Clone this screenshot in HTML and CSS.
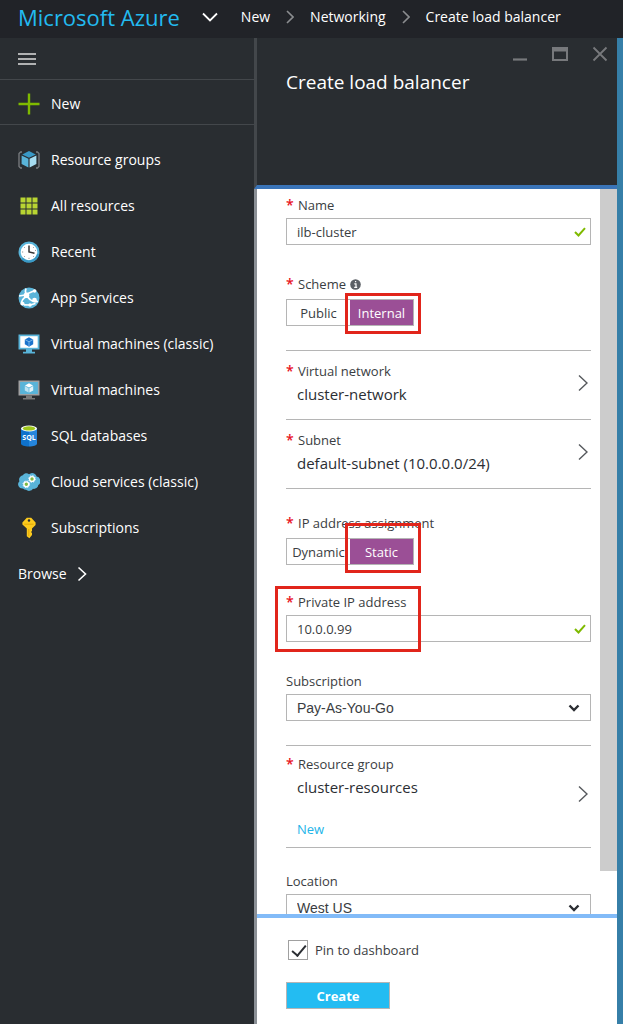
FILE: index.html
```html
<!DOCTYPE html>
<html lang="en">
<head>
<meta charset="utf-8">
<title>Create load balancer - Microsoft Azure</title>
<meta name="viewport" content="width=device-width, initial-scale=1.0">
<link rel="stylesheet" href="styles.css">
</head>
<body>

<header class="topbar">
    <a class="brand" href="#">Microsoft Azure</a>
    <button type="button" class="brand-toggle" aria-label="Switch portal">
        <svg width="16" height="10" viewBox="0 0 16 10"><path d="M1 1.5 L8 8.5 L15 1.5"/></svg>
    </button>
    <nav class="crumbs">
        <a href="#">New</a>
        <svg width="8" height="14" viewBox="0 0 8 14"><path d="M1 1 L7 7 L1 13"/></svg>
        <a href="#">Networking</a>
        <svg width="8" height="14" viewBox="0 0 8 14"><path d="M1 1 L7 7 L1 13"/></svg>
        <a href="#">Create load balancer</a>
    </nav>
</header>

<div class="portal">
    <nav class="sidebar">
        <button type="button" class="menu-btn" aria-label="Menu">
            <svg width="18" height="12" viewBox="0 0 18 12"><path d="M0 1H18M0 6H18M0 11H18"/></svg>
        </button>
        <a class="new-link" href="#">
            <svg width="22" height="22" viewBox="0 0 22 22"><path d="M11 0.5V21.5M0.5 11H21.5" stroke="#7fba00" stroke-width="2.4"/></svg>
            New
        </a>
        <ul class="services">
            <li><a href="#">
                <svg width="22" height="22" viewBox="0 0 22 22">
                    <path d="M4 3H2.6L1 4.6V17.4L2.6 19H4M18 3H19.4L21 4.6V17.4L19.4 19H18" fill="none" stroke="#7a7d80" stroke-width="1.3"/>
                    <path d="M11 2L17.8 5.4L11 8.8L4.2 5.4Z" fill="#3999c6"/>
                    <path d="M3.6 6.4L10.4 9.8V18.6L3.6 14.9Z" fill="#59b4d9"/>
                    <path d="M18.4 6.4L11.6 9.8V18.6L18.4 14.9Z" fill="#a6dcf0"/>
                </svg>
                Resource groups
            </a></li>
            <li><a href="#">
                <svg width="22" height="22" viewBox="0 0 22 22" fill="#b8d432">
                    <path d="M2.5 2.5h5v5h-5zM8.5 2.5h5v5h-5zM14.5 2.5h5v5h-5zM2.5 8.5h5v5h-5zM8.5 8.5h5v5h-5zM14.5 8.5h5v5h-5zM2.5 14.5h5v5h-5zM8.5 14.5h5v5h-5zM14.5 14.5h5v5h-5z"/>
                </svg>
                All resources
            </a></li>
            <li><a href="#">
                <svg width="22" height="22" viewBox="0 0 22 22">
                    <circle cx="11" cy="11" r="9.4" fill="#fff" stroke="#59b4d9" stroke-width="2.2"/>
                    <path d="M4 17.5A9.4 9.4 0 0 0 20 13" fill="none" stroke="#3999c6" stroke-width="2.2"/>
                    <path d="M11 4.5V11L16.5 12.3" fill="none" stroke="#333" stroke-width="1.5"/>
                    <path d="M4 11H5.2M17 9.5L18 9.3M11 16.8V18M6 6L6.8 6.8M16 6L15.2 6.8M6 16L6.8 15.2M16 16L15.2 15.2" stroke="#888" stroke-width="0.9"/>
                </svg>
                Recent
            </a></li>
            <li><a href="#">
                <svg width="22" height="22" viewBox="0 0 22 22">
                    <circle cx="11" cy="11" r="10.5" fill="#59b4d9"/>
                    <path d="M8 1.5C6.5 5 8 9 12 12.5C14 14.5 17 15 20 14.5M7.5 7.5L17.5 3.2M9 9.5C5 11 3 14 3.5 18M6 17.8L12 18L17.5 16.5M1 9L7.5 8" fill="none" stroke="#fff" stroke-width="1.7"/>
                    <circle cx="8.5" cy="8.2" r="2.8" fill="#fff"/>
                    <circle cx="16.5" cy="13.2" r="2.4" fill="#fff"/>
                    <circle cx="12" cy="18" r="1.7" fill="#fff"/>
                    <circle cx="4.6" cy="16.6" r="1.9" fill="#fff"/>
                    <circle cx="16.6" cy="4" r="1.7" fill="#fff"/>
                </svg>
                App Services
            </a></li>
            <li><a href="#">
                <svg width="22" height="22" viewBox="0 0 22 22">
                    <path d="M0.5 1.5H21.5V16.5H14V18.7H17V20.5H5V18.7H8V16.5H0.5Z" fill="#59b4d9"/>
                    <path d="M2.3 3.2H19.7V14.8H2.3Z" fill="#fff"/>
                    <path d="M11 4.2L15.2 6.5V11.2L11 13.8L6.8 11.2V6.5Z" fill="#1b73cc"/>
                    <path d="M7 6.6L11 8.8L15 6.6M11 8.8V13.5" fill="none" stroke="#8cc4f0" stroke-width="0.8"/>
                </svg>
                Virtual machines (classic)
            </a></li>
            <li><a href="#">
                <svg width="22" height="22" viewBox="0 0 22 22">
                    <path d="M0.5 1.5H21.5V16.5H0.5Z" fill="#a0a1a2"/>
                    <path d="M8 16.5H14V19H17V20.5H5V19H8Z" fill="#7a7a7a"/>
                    <path d="M2.1 3H19.9V15H2.1Z" fill="#59b4d9"/>
                    <path d="M11 4.2L15 6.4L11 8.6L7 6.4Z" fill="#fff"/>
                    <path d="M6.8 7L10.6 9.2V13.6L6.8 11.4Z" fill="#bde3f3"/>
                    <path d="M15.2 7L11.4 9.2V13.6L15.2 11.4Z" fill="#e3f4fa"/>
                </svg>
                Virtual machines
            </a></li>
            <li><a href="#">
                <svg width="22" height="22" viewBox="0 0 22 22">
                    <path d="M3 3.3V18.7C3 20.2 6.6 21.5 11 21.5V3.3Z" fill="#0f72cc"/>
                    <path d="M11 3.3V21.5C15.4 21.5 19 20.2 19 18.7V3.3Z" fill="#2585dc"/>
                    <ellipse cx="11" cy="3.5" rx="8" ry="3" fill="#fff"/>
                    <ellipse cx="11" cy="3.4" rx="6.4" ry="2.1" fill="#9fc71d"/>
                    <text x="11" y="15.4" text-anchor="middle" class="sql-text">SQL</text>
                </svg>
                SQL databases
            </a></li>
            <li><a href="#">
                <svg width="22" height="22" viewBox="0 0 22 22">
                    <path d="M5 17.5A4.3 4.3 0 0 1 1.4 10.2A4.4 4.4 0 0 1 4.8 4.3A4 4 0 0 1 11 3.3A4.6 4.6 0 0 1 18.6 5.6A4.6 4.6 0 0 1 20.3 14A4.4 4.4 0 0 1 15 17.8A4.8 4.8 0 0 1 8 18.8A4 4 0 0 1 5 17.5Z" fill="#59b4d9"/>
                    <circle cx="14" cy="8" r="2.4" fill="#7fba42" stroke="#fff" stroke-width="1.4"/>
                    <circle cx="14" cy="8" r="3.3" fill="none" stroke="#fff" stroke-width="1" stroke-dasharray="1.3 1.3"/>
                    <circle cx="8.3" cy="13.3" r="2.4" fill="#7fba42" stroke="#fff" stroke-width="1.4"/>
                    <circle cx="8.3" cy="13.3" r="3.3" fill="none" stroke="#fff" stroke-width="1" stroke-dasharray="1.3 1.3"/>
                </svg>
                Cloud services (classic)
            </a></li>
            <li><a href="#">
                <svg width="22" height="22" viewBox="0 0 22 22">
                    <path fill-rule="evenodd" d="M8.8 0.8H13.2L17.6 5.4V8L14 11.4V14L13 15L14 16V18L11.4 21.3L8.8 19.2V11.4L4.4 7.6V5.4ZM11 2.2A1.3 1.3 0 1 0 11 4.8A1.3 1.3 0 1 0 11 2.2Z" fill="#fcca1e"/>
                    <path d="M6.3 7.2H15.6M10.8 12V19" stroke="#e0a500" stroke-width="0.9"/>
                </svg>
                Subscriptions
            </a></li>
        </ul>
        <a class="browse" href="#">
            Browse
            <svg width="10" height="16" viewBox="0 0 10 16"><path d="M1.5 1.5 L8.5 8 L1.5 14.5"/></svg>
        </a>
    </nav>

    <main class="blade">
        <div class="blade-head">
            <div class="window-btns">
                <button type="button" aria-label="Minimize"><svg width="16" height="16" viewBox="0 0 16 16"><path d="M1 13.5H15" stroke-width="2.2"/></svg></button>
                <button type="button" aria-label="Maximize"><svg width="16" height="16" viewBox="0 0 16 16"><path d="M1 2H15V14H1Z" stroke-width="2"/><path d="M1 3.5H15" stroke-width="4"/></svg></button>
                <button type="button" aria-label="Close"><svg width="16" height="16" viewBox="0 0 16 16"><path d="M1.5 1.5L14.5 14.5M14.5 1.5L1.5 14.5" stroke-width="1.8"/></svg></button>
            </div>
            <h1>Create load balancer</h1>
        </div>

        <div class="blade-body">
            <form class="fields" id="lbForm">
                <div class="field">
                    <label class="required" for="name">Name</label>
                    <div class="textbox">
                        <input type="text" id="name" value="ilb-cluster">
                        <svg width="12" height="10" viewBox="0 0 12 10"><path d="M1 5L4.5 8.5L11 1.2"/></svg>
                    </div>
                </div>

                <fieldset class="field">
                    <legend class="required">Scheme
                        <svg class="info" width="11" height="11" viewBox="0 0 11 11"><circle cx="5.5" cy="5.5" r="5.3" fill="#5c6066"/><path d="M4.3 4.8H6V8.3M4.2 8.3H7.2M5 2.7H6.2" stroke="#fff" stroke-width="1.2" fill="none"/></svg>
                    </legend>
                    <div class="switch">
                        <label><input type="radio" name="scheme"><span>Public</span></label>
                        <label><input type="radio" name="scheme" checked><span>Internal</span></label>
                        <div class="mark mark-option"></div>
                    </div>
                </fieldset>

                <div class="pickers">
                    <button type="button" class="picker">
                        <span class="required">Virtual network</span>
                        <span class="picked">cluster-network</span>
                        <svg width="10" height="18" viewBox="0 0 10 18"><path d="M1 1.5L9 9L1 16.5"/></svg>
                    </button>
                    <button type="button" class="picker">
                        <span class="required">Subnet</span>
                        <span class="picked">default-subnet (10.0.0.0/24)</span>
                        <svg width="10" height="18" viewBox="0 0 10 18"><path d="M1 1.5L9 9L1 16.5"/></svg>
                    </button>
                </div>

                <fieldset class="field">
                    <legend class="required">IP address assignment</legend>
                    <div class="switch">
                        <label><input type="radio" name="assignment"><span>Dynamic</span></label>
                        <label><input type="radio" name="assignment" checked><span>Static</span></label>
                        <div class="mark mark-option mark-tall"></div>
                    </div>
                </fieldset>

                <div class="field">
                    <label class="required" for="ip">Private IP address</label>
                    <div class="textbox">
                        <input type="text" id="ip" value="10.0.0.99">
                        <svg width="12" height="10" viewBox="0 0 12 10"><path d="M1 5L4.5 8.5L11 1.2"/></svg>
                    </div>
                    <div class="mark mark-field"></div>
                </div>

                <div class="field">
                    <label for="subscription">Subscription</label>
                    <div class="dropdown">
                        <select id="subscription"><option>Pay-As-You-Go</option></select>
                        <svg width="12" height="8" viewBox="0 0 12 8"><path d="M1.5 1.5L6 6L10.5 1.5"/></svg>
                    </div>
                </div>

                <div class="pickers pickers-group">
                    <button type="button" class="picker">
                        <span class="required">Resource group</span>
                        <span class="picked">cluster-resources</span>
                        <svg width="10" height="18" viewBox="0 0 10 18"><path d="M1 1.5L9 9L1 16.5"/></svg>
                    </button>
                    <a class="new-group" href="#">New</a>
                </div>

                <div class="field">
                    <label for="location">Location</label>
                    <div class="dropdown">
                        <select id="location"><option>West US</option></select>
                        <svg width="12" height="8" viewBox="0 0 12 8"><path d="M1.5 1.5L6 6L10.5 1.5"/></svg>
                    </div>
                </div>
            </form>
            <div class="scroll-track"><div class="scroll-thumb"></div></div>
        </div>

        <div class="blade-foot">
            <label class="pin"><input type="checkbox" checked> Pin to dashboard</label>
            <button type="submit" form="lbForm" class="create-btn">Create</button>
        </div>
    </main>
</div>

</body>
</html>
```
FILE: styles.css
```css
* { box-sizing: border-box; }
body { margin: 0; height: 100vh; display: flex; flex-direction: column; overflow: hidden; font-family: "Open Sans", "Noto Sans", sans-serif; font-size: 14px; line-height: 20px; color: #3a3d42; background: #367fa8; }
a { color: inherit; text-decoration: none; }
button, input, select { font: inherit; color: inherit; margin: 0; }
button { background: none; border: none; padding: 0; text-align: left; }
svg { flex: none; display: block; }
fieldset { border: none; margin: 0; padding: 0; min-width: 0; }

/* top bar */
.topbar { height: 38px; flex: none; display: flex; align-items: center; padding: 0 18px 4px; background: #212328; color: #fff; }
.brand { font-size: 22px; color: #23baf0; }
.brand-toggle { margin: 0 23px 0 22px; }
.brand-toggle svg { fill: none; stroke: #fff; stroke-width: 1.8; }
.crumbs { display: flex; align-items: center; gap: 16px; white-space: nowrap; font-weight: 500; }
.crumbs svg { fill: none; stroke: #8b8d90; stroke-width: 1.6; }

.portal { flex: 1; min-height: 0; display: flex; padding-right: 6px; }

/* left menu */
.sidebar { width: 254px; flex: none; background: #292d31; color: #fff; font-weight: 500; }
.menu-btn { display: flex; align-items: center; width: 100%; height: 42px; padding-left: 18px; border-bottom: 1px solid #43474b; }
.menu-btn svg { stroke: #ddd; stroke-width: 1.4; }
.new-link { display: flex; align-items: center; gap: 11px; height: 45px; padding: 3px 0 0 18px; border-bottom: 1px solid #43474b; }
.services { list-style: none; margin: 12px 0 0; padding: 0; }
.services a { display: flex; align-items: center; gap: 11px; height: 46px; padding-left: 18px; white-space: nowrap; }
.sql-text { font-size: 7px; font-weight: bold; fill: #fff; }
.browse { display: flex; align-items: center; gap: 10px; height: 46px; padding-left: 18px; }
.browse svg { fill: none; stroke: #fff; stroke-width: 1.6; }

/* blade */
.blade { flex: 1; min-width: 0; display: flex; flex-direction: column; background: #fff; border-left: 3px solid #8b9096; }
.blade-head { height: 151px; flex: none; margin-left: -3px; padding: 8px 9px 0 29px; background: #292d31; color: #fff; border-left: 3px solid #43474b; border-bottom: 4px solid #3a74b8; }
.window-btns { display: flex; justify-content: flex-end; gap: 24px; height: 16px; }
.window-btns svg { fill: none; stroke: #77797c; }
h1 { margin: 6px 0 0; font-size: 19px; line-height: 28px; font-weight: normal; }

.blade-body { flex: 1; min-height: 0; display: flex; overflow: hidden; }
.fields { flex: 1; min-width: 0; padding: 6px 9px 0 29px; }
.scroll-track { width: 17px; flex: none; }
.scroll-thumb { height: 94%; background: #ccc; }

.field { position: relative; margin-bottom: 29px; }
fieldset.field { margin-bottom: 27px; }
.field > label, legend { display: block; padding: 0; margin-bottom: 3px; font-size: 13px; }
legend { display: flex; align-items: center; gap: 4px; margin-bottom: 5px; }
.required::before { content: "*"; color: #e81123; font-size: 14px; font-weight: 600; display: inline-block; width: 12px; height: 16px; vertical-align: top; }
legend.required::before { width: 8px; height: 20px; }

.textbox, .dropdown { display: flex; align-items: center; height: 27px; padding-right: 4px; border: 1px solid #b5b5b5; }
.textbox input { flex: 1; min-width: 0; height: 25px; padding: 0 10px; border: none; outline: none; background: none; font-size: 13px; }
.textbox svg { fill: none; stroke: #7fba00; stroke-width: 2; }
.dropdown { padding-right: 10px; font-family: "Liberation Sans", Arial, sans-serif; }
.dropdown select { flex: 1; min-width: 0; height: 25px; padding: 0 10px; border: none; outline: none; background: none; appearance: none; font-size: 14px; }
.dropdown svg { fill: none; stroke: #2b2e33; stroke-width: 2.4; }

.switch { position: relative; display: flex; width: 128px; height: 27px; border: 1px solid #b5b5b5; }
.switch label { flex: 1 1 0; min-width: 0; position: relative; font-size: 13px; }
.switch input { position: absolute; inset: 0; appearance: none; margin: 0; }
.switch span { display: flex; justify-content: center; align-items: center; height: 25px; }
.switch input:checked + span { background: #9b4f96; color: #fff; font-weight: 500; }

/* red call-outs over the fields */
.mark { position: absolute; border: 3px solid #e1251b; pointer-events: none; }
.mark-option { inset: -7px -8px -9px 58px; }
.mark-tall { top: -16px; }
.mark-field { width: 146px; top: -6px; bottom: -10px; left: -11px; }

.pickers { margin: -3px 0 24px; border-bottom: 1px solid #b5b5b5; }
.picker { display: grid; grid-template-columns: 1fr auto; grid-template-rows: 20px 20px; row-gap: 3px; align-content: start; align-items: center; width: 100%; height: 69px; padding: 10px 3px 0 0; border-top: 1px solid #b5b5b5; font-size: 13px; }
.picked { grid-column: 1; padding-left: 11px; font-size: 15px; color: #2b2e33; }
.picker svg { grid-column: 2; grid-row: 1 / 3; fill: none; stroke: #55585c; stroke-width: 1.4; }
.pickers-group { margin: -5px 0 23px; }
.pickers-group .picker { grid-template-rows: 20px 20px 10px; padding-top: 8px; }
.pickers-group .picker svg { grid-row: 2 / 4; }
.new-group { display: block; margin: 5px 0 8px 11px; font-size: 13px; color: #23b4e8; }

.blade-foot { flex: none; height: 110px; padding: 22px 29px 15px; border-top: 4px solid #82bbf8; background: #fff; }
.pin { display: flex; align-items: center; gap: 7px; margin-left: 2px; font-size: 13px; }
.pin input { appearance: none; width: 20px; height: 20px; border: 1px solid #a0a0a0; position: relative; }
.pin input:checked::after { content: ""; position: absolute; left: 6px; top: 1px; width: 6px; height: 12px; border: solid #2b2e33; border-width: 0 2px 2px 0; transform: rotate(40deg); }
.create-btn { display: block; width: 104px; height: 27px; margin-top: 22px; border: 1px solid #b5b5b5; background: #23bcf2; color: #fff; font-size: 13px; font-weight: bold; text-align: center; }
```
